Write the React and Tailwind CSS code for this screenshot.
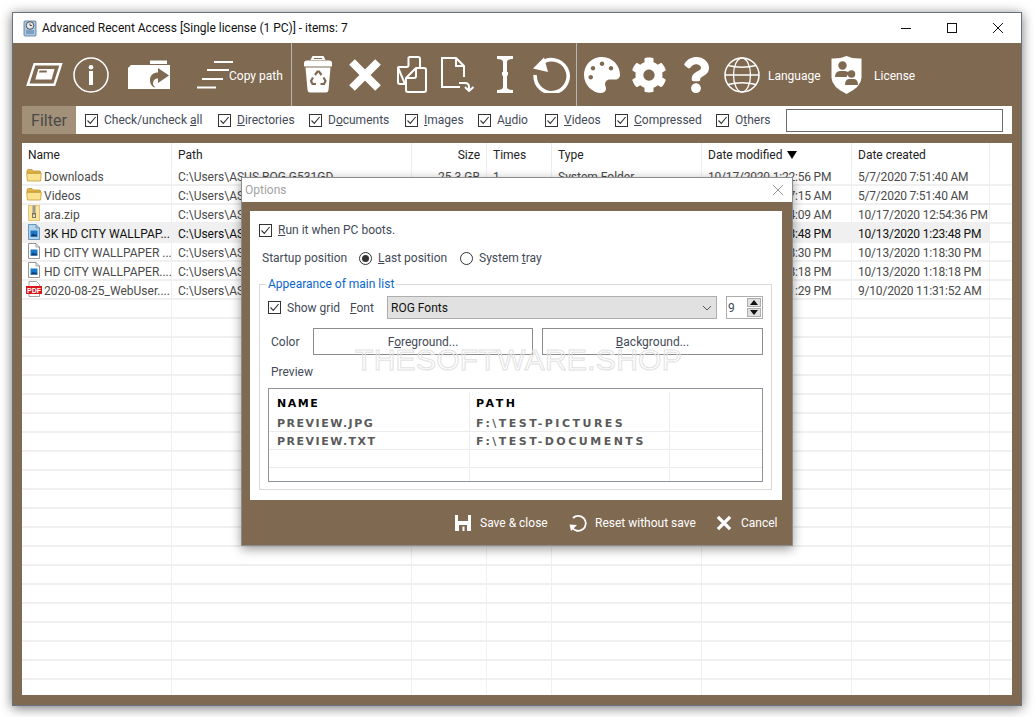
import { FaCog, FaPalette, FaQuestion } from "react-icons/fa";

// column widths of the main list
const columns = [
    { label: "Name", width: "w-[150px]" },
    { label: "Path", width: "w-[240px]" },
    { label: "Size", width: "w-[75px]", right: true },
    { label: "Times", width: "w-[65px]" },
    { label: "Type", width: "w-[150px]" },
    { label: "Date modified", width: "w-[150px]", sorted: true },
    { label: "Date created", width: "w-[138px]" },
];

const files = [
    ["folder", "Downloads", "C:\\Users\\ASUS ROG G531GD", "25.3 GB", "1", "System Folder", "10/17/2020 1:22:56 PM", "5/7/2020 7:51:40 AM"],
    ["folder", "Videos", "C:\\Users\\ASUS ROG G531GD", "", "", "", "10/13/2020 9:47:15 AM", "5/7/2020 7:51:40 AM"],
    ["zip", "ara.zip", "C:\\Users\\ASUS ROG G531GD", "", "", "", "10/17/2020 9:54:09 AM", "10/17/2020 12:54:36 PM"],
    ["imageSel", "3K HD CITY WALLPAP...", "C:\\Users\\ASUS ROG G531GD", "", "", "", "10/13/2020 1:23:48 PM", "10/13/2020 1:23:48 PM"],
    ["image", "HD CITY WALLPAPER ...", "C:\\Users\\ASUS ROG G531GD", "", "", "", "10/13/2020 1:18:30 PM", "10/13/2020 1:18:30 PM"],
    ["image", "HD CITY WALLPAPER....", "C:\\Users\\ASUS ROG G531GD", "", "", "", "10/13/2020 1:18:18 PM", "10/13/2020 1:18:18 PM"],
    ["pdf", "2020-08-25_WebUser....", "C:\\Users\\ASUS ROG G531GD", "", "", "", "9/10/2020 11:31:29 PM", "9/10/2020 11:31:52 AM"],
];

const emptyRows = [...Array(21)];

const Check = ({ className = "" }) => (
    <span className={`w-[13px] h-[13px] border border-[#333] bg-white flex items-center justify-center shrink-0 ${className}`}>
        <svg width="11" height="11" viewBox="0 0 11 11" fill="none" stroke="#333" strokeWidth="1.1">
            <path d="M1.5 5.5 L4.3 8.4 L9.6 2" />
        </svg>
    </span>
);

const FilterItem = ({ width, children }) => (
    <div className={`flex items-center gap-[6px] ${width}`}>
        <Check />
        <span className="text-[12px] text-[#434a57] whitespace-nowrap">{children}</span>
    </div>
);

const FileIcon = ({ kind }) => {
    if (kind === "folder") {
        return (
            <svg width="16" height="16" viewBox="0 0 16 16" className="shrink-0">
                <path d="M1 4 Q1 2.5 2.5 2.5 H6 L7.5 4 H13.5 Q14.5 4 14.5 5 V6 H1 Z" fill="#e0b64a" stroke="#b98d24" strokeWidth="0.7" />
                <path d="M0.7 6.5 H15.3 L14.6 14 H1.4 Z" fill="#fbe28f" stroke="#c79c34" strokeWidth="0.8" />
            </svg>
        );
    }
    if (kind === "zip") {
        return (
            <svg width="16" height="16" viewBox="0 0 16 16" className="shrink-0">
                <rect x="2.5" y="0.5" width="11" height="15" fill="#fbe59c" stroke="#d8bd6a" strokeWidth="0.8" />
                <rect x="6.5" y="0.5" width="3" height="8" fill="#9c9c8e" />
                <rect x="6" y="8" width="4" height="5" fill="#77776c" />
                <rect x="7" y="9.5" width="2" height="2.5" fill="#fbe59c" />
            </svg>
        );
    }
    if (kind === "pdf") {
        return (
            <svg width="16" height="16" viewBox="0 0 16 16" className="shrink-0">
                <path d="M3 0.5 H10.5 L13.5 3.5 V15.5 H3 Z" fill="#fff" stroke="#8b8b8b" strokeWidth="0.8" />
                <rect x="0" y="5" width="16" height="8" fill="#d9141c" />
                <text x="8" y="11.6" textAnchor="middle" fontSize="7" fontWeight="700" fill="#fff" fontFamily="Liberation Sans, sans-serif">PDF</text>
            </svg>
        );
    }
    const selected = kind === "imageSel";
    return (
        <svg width="16" height="16" viewBox="0 0 16 16" className="shrink-0">
            <path d="M2.5 0.5 H10 L13.5 4 V15.5 H2.5 Z" fill={selected ? "#b5d3ea" : "#fff"} stroke={selected ? "#5b8fb9" : "#8a8a8a"} strokeWidth="0.9" />
            <path d="M10 0.5 V4 H13.5" fill="none" stroke={selected ? "#5b8fb9" : "#8a8a8a"} strokeWidth="0.8" />
            <rect x="4.5" y="6.5" width="7" height="6" fill="#1a78c8" />
            <path d="M4.5 12.5 L7 9.5 L8.8 11 L10 10 L11.5 12.5 Z" fill="#0c3e78" />
        </svg>
    );
};

/* toolbar drawings */
const WindowIcon = () => (
    <svg width="37" height="23" viewBox="0 0 37 23" fill="none" className="ml-[13px]">
        <path d="M8.5 1.2 H35 L28.3 21.8 H1.8 Z" stroke="#fff" strokeWidth="2.4" />
        <path d="M12.3 6 H28.5 L25.6 16.6 H9.3 Z" fill="#fff" />
        <path d="M13.6 7.4 H21 L20.6 9.6 H13 Z" fill="#7f6951" />
    </svg>
);

const InfoIcon = () => (
    <svg width="36" height="36" viewBox="0 0 36 36" fill="none" className="ml-[10px]">
        <circle cx="18" cy="18" r="17" stroke="#fff" strokeWidth="1.5" />
        <rect x="16" y="14" width="4" height="14" fill="#fff" />
        <circle cx="18" cy="10.2" r="2.3" fill="#fff" />
    </svg>
);

const FolderShareIcon = () => (
    <svg width="43" height="30" viewBox="0 0 43 30" className="ml-[19px]">
        <path d="M22 0.5 H39 V4 H22 Z" fill="#fff" />
        <path d="M3 5 H42 V29 H0 V8 Z" fill="#fff" />
        <path d="M30 8 L41 15.5 L30 23 V18.5 C26 18.5 25 21 25 24.5 C25.5 25.5 26.5 26.5 27.5 27.5 C24 27 22 24 22 20 C22 15 25.5 12.5 30 12.5 Z" fill="#7f6951" />
    </svg>
);

const CopyPathIcon = () => (
    <svg width="37" height="28" viewBox="0 0 37 28" stroke="#fff" strokeWidth="2" className="ml-[26px]">
        <path d="M17 1 H36" />
        <path d="M10 9 H32" />
        <path d="M5 18 H26" />
        <path d="M0 26.5 H19" />
    </svg>
);

const BinIcon = () => (
    <svg width="30" height="37" viewBox="0 0 30 37" className="ml-[11px]">
        <path d="M9 1 Q9 0 10 0 H20 Q21 0 21 1 L22.5 4 H7.5 Z" fill="#fff" />
        <path d="M11 2 H19 V3 H11 Z" fill="#7f6951" />
        <path d="M4 4.5 H26 Q29 4.5 29 7 V10.5 H1 V7 Q1 4.5 4 4.5 Z" fill="#fff" />
        <path d="M2.5 11.5 H27.5 L25.5 34 Q25.3 36.5 23 36.5 H7 Q4.7 36.5 4.5 34 Z" fill="#fff" />
        <g fill="none" stroke="#7f6951" strokeWidth="2.2">
            <path d="M12 19 L14.5 15.5 H16 L18.5 19" />
            <path d="M20.5 21.5 L22.5 25 L21 28 H17.5" />
            <path d="M13 28 H9.5 L8 25 L10 21.5" />
        </g>
    </svg>
);

const CrossIcon = ({ size = 34, width = 8, className = "" }) => (
    <svg width={size} height={size} viewBox="0 0 34 34" stroke="#fff" strokeWidth={width} className={className}>
        <path d="M4 4 L30 30 M30 4 L4 30" />
    </svg>
);

const CopyIcon = () => (
    <svg width="30" height="37" viewBox="0 0 30 37" fill="none" stroke="#fff" strokeWidth="2" strokeLinejoin="round" className="ml-[15px]">
        <path d="M11.5 1 H21 Q23 1 23 3 V11 M8 28 H3 Q1 28 1 26 V11.5 Z" />
        <path d="M19 12 H27 Q29 12 29 14 V34 Q29 36 27 36 H11 Q9 36 9 34 V22 Z" />
        <path d="M19 12 V20 Q19 22 17 22 H9" />
        <path d="M11.5 1 V9 Q11.5 11 9.5 11 H1" />
    </svg>
);

const FileMoveIcon = () => (
    <svg width="34" height="35" viewBox="0 0 34 35" fill="none" stroke="#fff" strokeWidth="2" className="ml-[14px]">
        <path d="M23 20 V9 L15 1 H1 V30 H19" />
        <path d="M15 1 V9 H23" />
        <path d="M18 26 H24 Q28 26 28 30 V34 M24 30 L28 34 L32.5 30" />
    </svg>
);

const IBeamIcon = () => (
    <svg width="16" height="37" viewBox="0 0 16 37" className="ml-[22px]">
        <path d="M0 0 H16 V3 Q10 3 10 6 V16 H11 V19.5 H10 V31 Q10 34 16 34 V37 H0 V34 Q6 34 6 31 V19.5 H5 V16 H6 V6 Q6 3 0 3 Z" fill="#fff" />
    </svg>
);

const UndoIcon = () => (
    <svg width="38" height="37" viewBox="0 0 38 37" fill="none" className="ml-[20px]">
        <path d="M7.5 8 A16.5 16.5 0 1 1 2.2 19" stroke="#fff" strokeWidth="3.6" />
        <path d="M0 12.5 L15 16 L11 1.5 Z" fill="#fff" />
    </svg>
);

const GlobeIcon = () => (
    <svg width="36" height="36" viewBox="0 0 36 36" fill="none" stroke="#fff" strokeWidth="1.3" className="ml-[10px]">
        <circle cx="18" cy="18" r="17" strokeWidth="1.5" />
        <ellipse cx="18" cy="18" rx="8.5" ry="17" />
        <path d="M1 18 H35" />
        <path d="M4 8.5 Q18 12 32 8.5" />
        <path d="M4 27.5 Q18 24 32 27.5" />
    </svg>
);

const ShieldIcon = () => (
    <svg width="31" height="38" viewBox="0 0 31 38" className="ml-[11px]">
        <path d="M15.5 0 Q22 3 30.5 2.5 V22 Q30 31 15.5 38 Q1 31 0.5 22 V2.5 Q9 3 15.5 0 Z" fill="#fff" />
        <circle cx="11.5" cy="9.5" r="4.2" fill="#7f6951" />
        <path d="M4 21 Q4 15.5 9 15 H14 Q18 15.5 19 18 Q16 18.5 15.5 21 Z" fill="#7f6951" />
        <circle cx="20.5" cy="18" r="3.8" fill="#7f6951" />
        <path d="M14 29 Q14 23.5 18 23 H23 Q27 23.5 27 29 Z" fill="#7f6951" />
    </svg>
);

const SaveIcon = () => (
    <svg width="16" height="16" viewBox="0 0 16 16" className="shrink-0">
        <path d="M0 0 H3 V6 H13 V0 H16 V16 H0 Z" fill="#fff" />
        <path d="M4 10 H12 V16 H9.5 V11.5 H7.5 V16 H4 Z" fill="#7f6951" />
    </svg>
);

const ResetIcon = () => (
    <svg width="18" height="18" viewBox="0 0 18 18" fill="none" className="shrink-0">
        <path d="M4 4 A7.5 7.5 0 1 1 3 13.5" stroke="#fff" strokeWidth="1.8" />
        <path d="M0.5 10.5 L8 11 L2 17 Z" fill="#fff" />
    </svg>
);

const ToolText = ({ className, children }) => (
    <span className={`text-[12px] pt-[2px] text-white whitespace-nowrap ${className}`}>{children}</span>
);

const GroupLine = () => <div className="w-px self-stretch bg-[#b5b5b5] shrink-0" />;

const PREVIEW_FONT = "font-['DejaVu_Sans'] font-bold uppercase text-[11px] leading-none";

const PreviewRow = ({ a, b, head }) => (
    <div className={`flex ${head ? "h-[25px] pt-[3px] text-black" : "h-[18px] pt-[1px] border-b border-[#ececec] text-[#5a5a5a]"}`}>
        <div className={`w-[201px] pl-[8px] flex items-center border-r border-[#ececec] tracking-[1.5px] ${PREVIEW_FONT}`}>{a}</div>
        <div className={`w-[200px] pl-[6px] flex items-center border-r border-[#ececec] tracking-[2.5px] whitespace-nowrap ${PREVIEW_FONT}`}>{b}</div>
    </div>
);

const OptionsDialog = () => (
    <div className="absolute left-[241px] top-[177px] w-[552px] h-[369px] flex flex-col border border-[#8c8c8c] bg-[#7f6951] shadow-[0_3px_10px_rgba(0,0,0,0.4)]">
        <div className="h-[24px] bg-white flex items-center justify-between pl-[3px] pr-[8px] shrink-0">
            <span className="text-[12px] text-[#a3a3a3]">Options</span>
            <svg width="12" height="12" viewBox="0 0 12 12" stroke="#9a9a9a" strokeWidth="1"><path d="M1 1 L11 11 M11 1 L1 11" /></svg>
        </div>
        <div className="ml-[8px] mt-[9px] w-[532px] h-[289px] bg-white pl-[9px] pr-[10px] relative shrink-0">
            <div className="flex items-center gap-[6px] pt-[10px]">
                <Check />
                <span className="text-[12px] text-[#434a57]"><u>R</u>un it when PC boots.</span>
            </div>
            <div className="flex items-center h-[20px] mt-[9px] text-[12px] text-[#434a57]">
                <span className="ml-[3px] w-[97px]">Startup position</span>
                <span className="w-[13px] h-[13px] rounded-full border border-[#333] flex items-center justify-center">
                    <span className="w-[7px] h-[7px] rounded-full bg-[#333]" />
                </span>
                <span className="ml-[6px] w-[82px]"><u>L</u>ast position</span>
                <span className="w-[13px] h-[13px] rounded-full border border-[#333]" />
                <span className="ml-[6px]">System <u>t</u>ray</span>
            </div>
            <div className="relative mt-[16px] h-[206px] border border-[#d9d9d9] px-[8px]">
                <span className="absolute left-[6px] -top-[9px] bg-white px-[2px] text-[12px] leading-[16px] text-[#0a66cc]">Appearance of main list</span>
                <div className="flex items-center h-[23px] mt-[11px]">
                    <Check />
                    <span className="ml-[6px] w-[63px] text-[12px] text-[#434a57]">Show <u>g</u>rid</span>
                    <span className="w-[37px] text-[12px] text-[#434a57]"><u>F</u>ont</span>
                    <div className="w-[330px] h-[23px] bg-[#e1e1e1] border border-[#adadad] flex items-center justify-between pl-[3px] pr-[3px]">
                        <span className="text-[12px] text-[#111]">ROG Fonts</span>
                        <svg width="12" height="12" viewBox="0 0 12 12" fill="none" stroke="#555" strokeWidth="1"><path d="M2 4 L6 8 L10 4" /></svg>
                    </div>
                    <div className="ml-[9px] w-[37px] h-[23px] border border-[#adadad] flex items-center justify-between pl-[1px] pr-[1px]">
                        <span className="text-[12px] text-[#434a57]">9</span>
                        <div className="flex flex-col gap-px">
                            <span className="w-[14px] h-[9px] bg-[#e1e1e1] border border-[#adadad] flex items-center justify-center">
                                <svg width="8" height="5" viewBox="0 0 8 5"><path d="M4 0 L8 5 H0 Z" fill="#111" /></svg>
                            </span>
                            <span className="w-[14px] h-[9px] bg-[#e1e1e1] border border-[#adadad] flex items-center justify-center">
                                <svg width="8" height="5" viewBox="0 0 8 5"><path d="M0 0 H8 L4 5 Z" fill="#111" /></svg>
                            </span>
                        </div>
                    </div>
                </div>
                <div className="flex items-center h-[27px] mt-[9px] text-[12px] text-[#434a57]">
                    <span className="ml-[3px] w-[42px]">Color</span>
                    <button className="w-[220px] h-[27px] border border-[#8c8c8c] bg-white">F<u>o</u>reground...</button>
                    <button className="ml-[9px] w-[221px] h-[27px] border border-[#8c8c8c] bg-white"><u>B</u>ackground...</button>
                </div>
                <div className="ml-[3px] mt-[8px] h-[17px] pt-[1px] text-[12px] leading-[17px] text-[#434a57]">Preview</div>
                <div className="mt-[8px] w-[495px] h-[94px] border border-[#8e939a] overflow-hidden">
                    <PreviewRow head a="Name" b="Path" />
                    <PreviewRow a="Preview.jpg" b="F:\Test-Pictures" />
                    <PreviewRow a="Preview.txt" b="F:\Test-Documents" />
                    <PreviewRow a="" b="" />
                    <PreviewRow a="" b="" />
                </div>
            </div>
            {/* watermark sits across the dialog */}
            <span className="absolute left-[105px] top-[134px] font-['Liberation_Sans'] text-[30px] leading-none tracking-[0.3px] whitespace-nowrap text-transparent [-webkit-text-stroke:1px_#e2e2e2]">THESOFTWARE.SHOP</span>
        </div>
        <div className="flex-1 flex items-center text-[12px] text-white pl-[213px]">
            <SaveIcon />
            <span className="ml-[9px] w-[89px] pt-[1px]">Save &amp; close</span>
            <ResetIcon />
            <span className="ml-[8px] w-[121px] pt-[1px]">Reset without save</span>
            <CrossIcon size={16} width={7} />
            <span className="ml-[9px] pt-[1px]">Cancel</span>
        </div>
    </div>
);

export default function App() {
    return (
        <div className="relative w-[1034px] h-[717px] bg-white overflow-hidden pl-[12px] pt-[12px] font-['Roboto',sans-serif]">
            {/* other window peeking out below */}
            <span className="absolute left-[441px] top-[694px] font-['Liberation_Sans'] font-bold text-[12px] leading-[14px] -tracking-[0.3px] text-[#222]">ADVANCED RECENT ACCESS</span>

            <div className="relative w-[1010px] h-[694px] flex flex-col border border-[#68737c] bg-[#7f6951] shadow-[0_2px_11px_rgba(0,0,0,0.55)]">
                {/* title bar */}
                <div className="h-[30px] bg-white flex items-center shrink-0">
                    <svg width="15" height="17" viewBox="0 0 15 17" className="ml-[10px]">
                        <rect x="1" y="1" width="12" height="15" rx="1" fill="#a8c9e6" stroke="#56748f" strokeWidth="0.8" />
                        <circle cx="7" cy="5.5" r="3.8" fill="#e6e6e6" stroke="#444" strokeWidth="0.9" />
                        <path d="M7 3.5 V5.5 H9" fill="none" stroke="#333" strokeWidth="0.8" />
                        <path d="M3 11 H11 M3 13 H11" stroke="#4b6f91" strokeWidth="0.9" />
                    </svg>
                    <span className="ml-[4px] text-[12px] text-[#111]">Advanced Recent Access [Single license (1 PC)] - items: 7</span>
                    <div className="ml-auto flex items-center shrink-0">
                        <svg width="12" height="12" viewBox="0 0 12 12" stroke="#111" strokeWidth="1"><path d="M1 6.5 H11" /></svg>
                        <svg width="12" height="12" viewBox="0 0 12 12" stroke="#111" fill="none" strokeWidth="1" className="ml-[34px]"><rect x="1.5" y="1.5" width="9" height="9" /></svg>
                        <svg width="12" height="12" viewBox="0 0 12 12" stroke="#111" strokeWidth="1" className="ml-[34px] mr-[17px]"><path d="M1 1 L11 11 M11 1 L1 11" /></svg>
                    </div>
                </div>

                {/* toolbar */}
                <div className="h-[63px] flex items-center shrink-0">
                    <WindowIcon />
                    <InfoIcon />
                    <FolderShareIcon />
                    <CopyPathIcon />
                    <ToolText className="-ml-[5px] w-[62px]">Copy path</ToolText>
                    <GroupLine />
                    <BinIcon />
                    <CrossIcon className="ml-[15px]" />
                    <CopyIcon />
                    <FileMoveIcon />
                    <IBeamIcon />
                    <UndoIcon />
                    <div className="ml-[5px] flex items-center self-stretch"><GroupLine /></div>
                    <FaPalette size={36} color="#fff" className="ml-[7px]" />
                    <FaCog size={36} color="#fff" className="ml-[11px]" />
                    <FaQuestion size={36} color="#fff" className="ml-[11px]" />
                    <GlobeIcon />
                    <ToolText className="ml-[8px] w-[52px]">Language</ToolText>
                    <ShieldIcon />
                    <ToolText className="ml-[12px]">License</ToolText>
                </div>

                {/* filter row */}
                <div className="mx-[9px] h-[28px] bg-white flex items-center shrink-0">
                    <div className="w-[54px] h-full bg-[#a29078] flex items-center justify-center pt-[1px] text-[16px] text-[#4a4a4a]">Filter</div>
                    <div className="flex items-center ml-[9px]">
                        <FilterItem width="w-[133px]">Check/uncheck <u>a</u>ll</FilterItem>
                        <FilterItem width="w-[91px]"><u>D</u>irectories</FilterItem>
                        <FilterItem width="w-[96px]">D<u>o</u>cuments</FilterItem>
                        <FilterItem width="w-[73px]"><u>I</u>mages</FilterItem>
                        <FilterItem width="w-[67px]">A<u>u</u>dio</FilterItem>
                        <FilterItem width="w-[70px]"><u>V</u>ideos</FilterItem>
                        <FilterItem width="w-[101px]"><u>C</u>ompressed</FilterItem>
                        <FilterItem width="w-[70px]">O<u>t</u>hers</FilterItem>
                    </div>
                    <div className="w-[217px] h-[23px] border border-[#6b6b6b] shrink-0" />
                </div>

                {/* main list */}
                <div className="mx-[9px] mt-[9px] mb-[10px] flex-1 bg-white overflow-hidden">
                    <div className="flex h-[24px]">
                        {columns.map((col) => (
                            <div key={col.label} className={`${col.width} px-[6px] flex items-center border-r border-[#ececec] text-[12px] text-[#222] whitespace-nowrap ${col.right ? "justify-end" : ""}`}>
                                {col.label}
                                {col.sorted && (
                                    <svg width="10" height="8" viewBox="0 0 10 8" className="ml-[4px]"><path d="M0 0 H10 L5 8 Z" fill="#000" /></svg>
                                )}
                            </div>
                        ))}
                    </div>
                    {files.map((file, i) => (
                        <div key={i} className={`flex h-[19px] border-b-2 border-[#f0f0f0] text-[12px] leading-[21px] ${i === 3 ? "text-[#111]" : "text-[#4a4a4a]"}`}>
                            <div className={`flex ${i === 3 ? "bg-[#f0f0f0]" : ""}`}>
                                <div className="w-[150px] pl-[4px] flex gap-[2px] border-r border-[#f0f0f0] whitespace-nowrap overflow-hidden">
                                    <FileIcon kind={file[0]} />
                                    {file[1]}
                                </div>
                                <div className="w-[240px] px-[6px] border-r border-[#f0f0f0] whitespace-nowrap overflow-hidden">{file[2]}</div>
                                <div className="w-[75px] px-[6px] text-right border-r border-[#f0f0f0]">{file[3]}</div>
                                <div className="w-[65px] px-[6px] border-r border-[#f0f0f0]">{file[4]}</div>
                                <div className="w-[150px] px-[6px] border-r border-[#f0f0f0]">{file[5]}</div>
                                <div className="w-[150px] px-[6px] border-r border-[#f0f0f0] whitespace-nowrap tracking-[-0.2px]">{file[6]}</div>
                                <div className="w-[138px] px-[6px] border-r border-[#f0f0f0] whitespace-nowrap tracking-[-0.2px]">{file[7]}</div>
                            </div>
                        </div>
                    ))}
                    {emptyRows.map((_, i) => (
                        <div key={i} className="flex h-[19px] border-b-2 border-[#f0f0f0]">
                            {columns.map((col) => (
                                <div key={col.label} className={`${col.width} border-r border-[#f0f0f0]`} />
                            ))}
                        </div>
                    ))}
                </div>
            </div>

            <OptionsDialog />
        </div>
    );
}
